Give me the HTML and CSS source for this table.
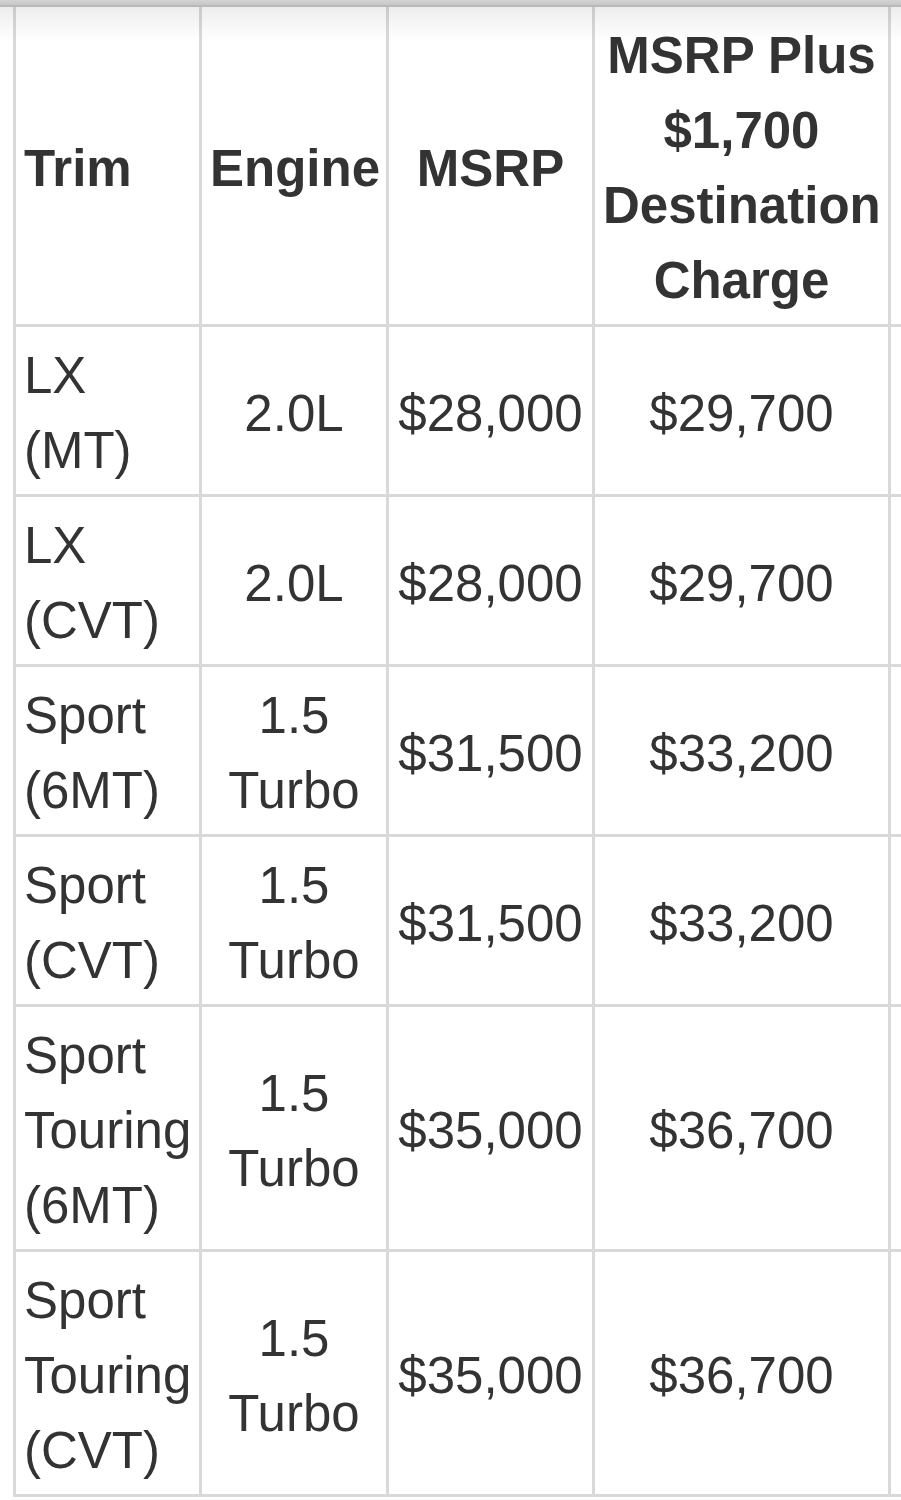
FILE: index.html
```html
<!DOCTYPE html>
<html lang="en">
<head>
<meta charset="utf-8">
<title>Trim pricing</title>
<link rel="stylesheet" href="styles.css">
</head>
<body>
<div class="page">
  <div class="topbar"></div>
  <div class="scroller">
    <table class="prices">
      <colgroup>
        <col class="c1"><col class="c2"><col class="c3"><col class="c4"><col class="c5">
      </colgroup>
      <thead>
        <tr>
          <th class="left">Trim</th>
          <th>Engine</th>
          <th>MSRP</th>
          <th>MSRP Plus $1,700 Destination Charge</th>
          <th></th>
        </tr>
      </thead>
      <tbody>
        <tr><td class="left">LX<br>(MT)</td><td>2.0L</td><td>$28,000</td><td>$29,700</td><td></td></tr>
        <tr><td class="left">LX<br>(CVT)</td><td>2.0L</td><td>$28,000</td><td>$29,700</td><td></td></tr>
        <tr><td class="left">Sport<br>(6MT)</td><td>1.5<br>Turbo</td><td>$31,500</td><td>$33,200</td><td></td></tr>
        <tr><td class="left">Sport<br>(CVT)</td><td>1.5<br>Turbo</td><td>$31,500</td><td>$33,200</td><td></td></tr>
        <tr><td class="left">Sport<br>Touring<br>(6MT)</td><td>1.5<br>Turbo</td><td>$35,000</td><td>$36,700</td><td></td></tr>
        <tr><td class="left">Sport<br>Touring<br>(CVT)</td><td>1.5<br>Turbo</td><td>$35,000</td><td>$36,700</td><td></td></tr>
      </tbody>
    </table>
  </div>
</div>
</body>
</html>
```

FILE: styles.css
```css
html, body {
  margin: 0;
  padding: 0;
  background: #ffffff;
}

.page {
  position: relative;
  width: 901px;
  height: 1500px;
  overflow: hidden;
  background: #ffffff;
}

.topbar {
  position: absolute;
  left: 0;
  top: 0;
  width: 100%;
  height: 5px;
  background: linear-gradient(#d4d4d4, #c6c6c6);
  border-bottom: 2px solid #b9b9b9;
  z-index: 2;
}

.topbar::after {
  content: "";
  position: absolute;
  left: 0;
  top: 7px;
  width: 100%;
  height: 34px;
  background: linear-gradient(rgba(0, 0, 0, 0.07), rgba(0, 0, 0, 0));
}

.scroller {
  padding: 4px 0 0 13px;
}

.prices {
  border-collapse: collapse;
  table-layout: fixed;
  width: 1080px;
  font-family: "Liberation Sans", Arial, Helvetica, sans-serif;
  font-size: 51px;
  line-height: 75px;
  color: #333333;
  border: 3px solid #d9d9d9;
}

.c1 { width: 186px; }
.c2 { width: 187px; }
.c3 { width: 206px; }
.c4 { width: 296px; }
.c5 { width: 205px; }

.prices th,
.prices td {
  border: 3px solid #d9d9d9;
  padding: 11px 8px 6px 8px;
  text-align: center;
  vertical-align: middle;
  white-space: nowrap;
}

.prices th {
  font-weight: bold;
  white-space: normal;
}

.prices .left {
  text-align: left;
}
```
